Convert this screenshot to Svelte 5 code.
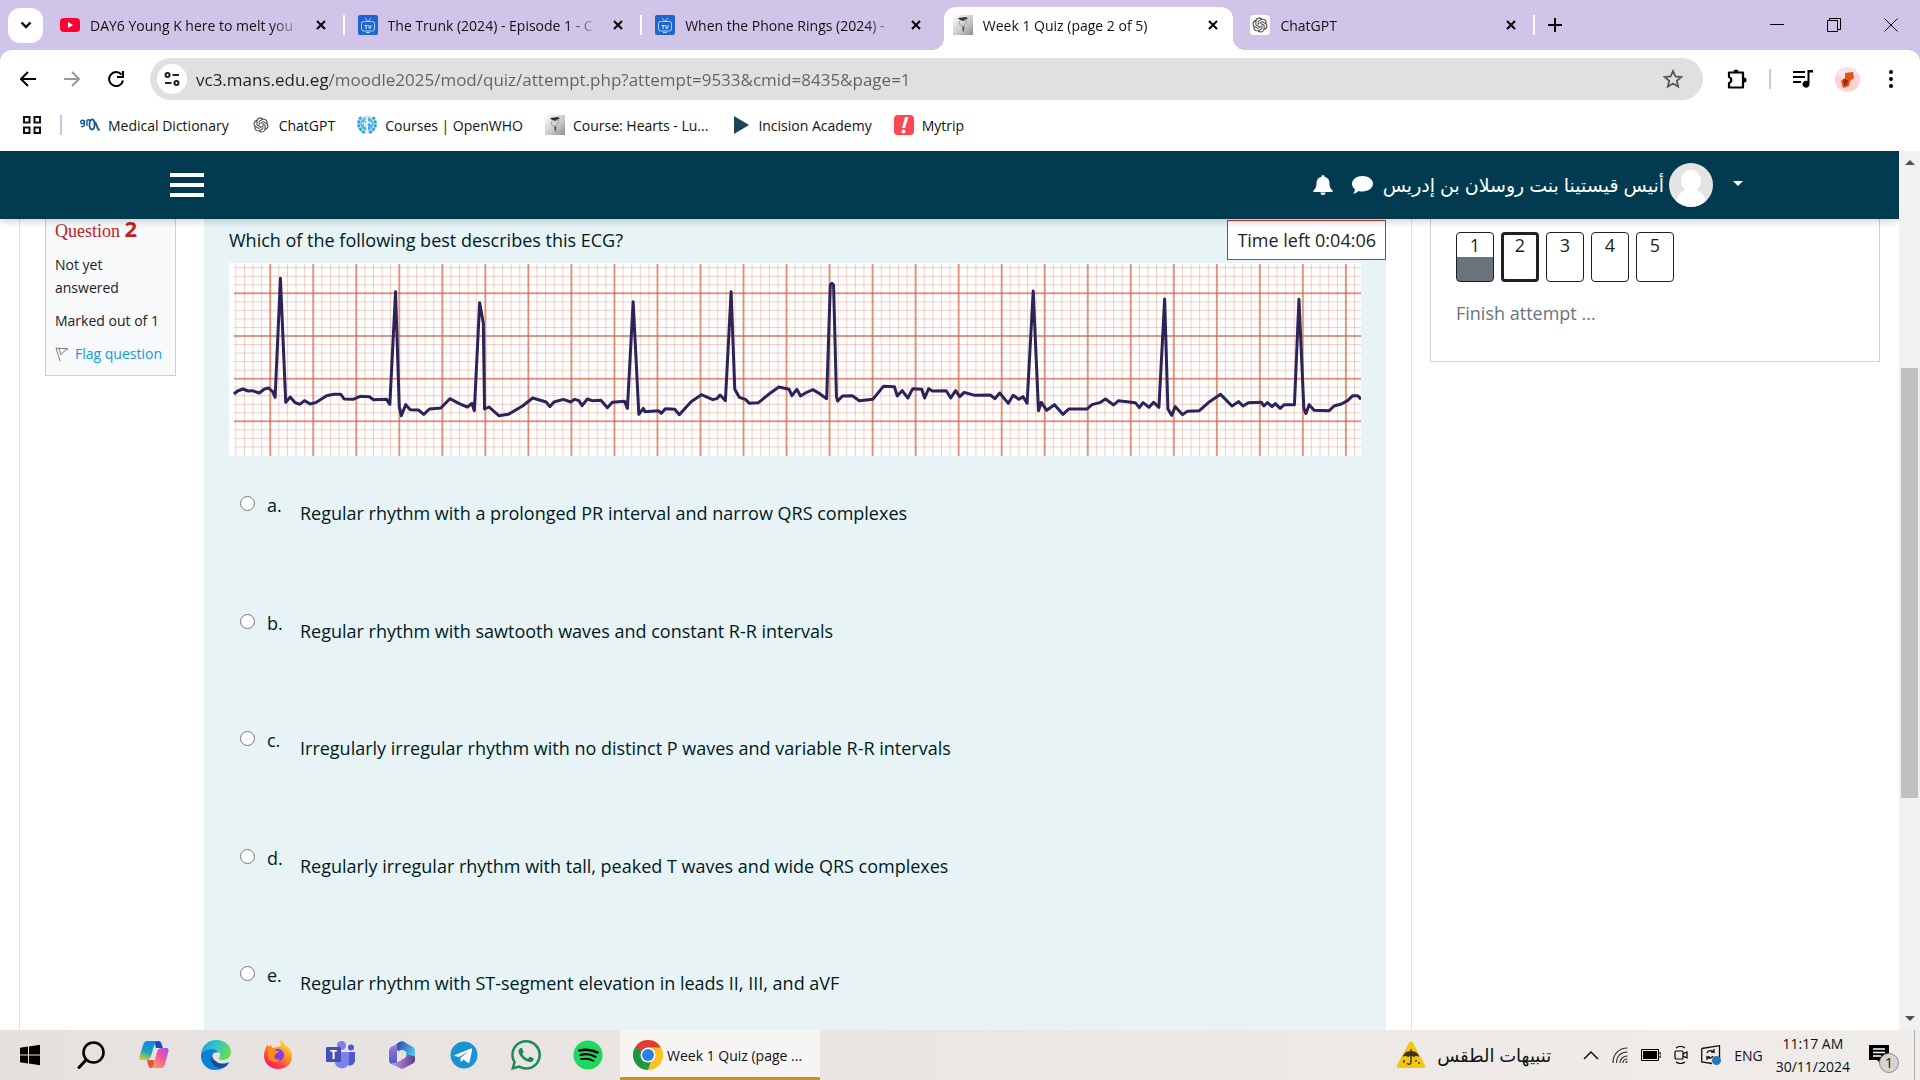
<script lang="ts">
	type Tab = { title: string; icon: string; active?: boolean };

	const tabs: Tab[] = [
		{ title: 'DAY6 Young K here to melt you', icon: 'youtube' },
		{ title: 'The Trunk (2024) - Episode 1 - C', icon: 'tv' },
		{ title: 'When the Phone Rings (2024) -', icon: 'tv' },
		{ title: 'Week 1 Quiz (page 2 of 5)', icon: 'moodle', active: true },
		{ title: 'ChatGPT', icon: 'openai' }
	];

	const bookmarks = [
		{ title: 'Medical Dictionary', icon: 'meddict' },
		{ title: 'ChatGPT', icon: 'openai' },
		{ title: 'Courses | OpenWHO', icon: 'who' },
		{ title: 'Course: Hearts - Lu...', icon: 'moodle' },
		{ title: 'Incision Academy', icon: 'incision' },
		{ title: 'Mytrip', icon: 'mytrip' }
	];

	const answers = [
		'Regular rhythm with a prolonged PR interval and narrow QRS complexes',
		'Regular rhythm with sawtooth waves and constant R-R intervals',
		'Irregularly irregular rhythm with no distinct P waves and variable R-R intervals',
		'Regularly irregular rhythm with tall, peaked T waves and wide QRS complexes',
		'Regular rhythm with ST-segment elevation in leads II, III, and aVF'
	];

	const apps = ['windows', 'search', 'copilot', 'edge', 'firefox', 'teams', 'm365', 'telegram', 'whatsapp', 'spotify'];

	let url = $state('vc3.mans.edu.eg/moodle2025/mod/quiz/attempt.php?attempt=9533&cmid=8435&page=1');
	let selected = $state('');

	// chart paper: one big square is 105.4 x 128 units, five small ones in each
	const minorX = Array.from({ length: 131 }, (_, i) => 577.7 + i * 21.08);
	const majorX = Array.from({ length: 26 }, (_, i) => 662 + i * 105.4);
	const minorY = Array.from({ length: 22 }, (_, i) => 353.2 + i * 25.6);
	const majorY = [430, 558, 686, 814];

	const trace =
		'573,732 582,723 595,717 608,723 618,722 635,729 648,717 658,714 668,725 674,742 687,385 700,757 711,741 722,757 734,763 746,752 760,762 775,757 800,737 818,733 835,733 843,747 865,748 882,739 905,740 915,749 947,748 955,763 969,425 978,770 983,797 994,764 1005,779 1025,780 1038,793 1052,777 1080,774 1102,746 1125,761 1145,771 1156,760 1162,782 1175,458 1184,520 1187,777 1198,771 1222,797 1245,793 1280,768 1305,744 1338,756 1347,770 1357,756 1380,748 1398,756 1408,748 1418,752 1426,767 1439,747 1450,752 1472,751 1488,773 1500,757 1530,754 1537,775 1551,455 1565,793 ' +
		'1576,775 1580,785 1613,782 1620,790 1630,776 1653,778 1664,794 1693,755 1718,734 1746,749 1756,746 1764,735 1777,752 1791,425 1800,718 1811,742 1826,748 1836,760 1858,758 1883,733 1908,711 1933,718 1940,737 1952,718 1961,738 1973,729 1991,719 2008,731 2025,746 2034,405 2038,400 2042,405 2049,740 2052,753 2064,738 2088,737 2105,752 2138,748 2164,709 2191,710 2198,738 2210,722 2224,744 2236,716 2258,718 2265,744 2275,716 2284,723 2318,722 2329,744 2341,722 2351,740 2362,727 2388,736 2426,735 2437,746 2449,729 2470,760 2482,736 2496,748 2506,740 2516,760 2531,423 ' +
		'2544,782 2551,757 2564,781 2583,764 2604,793 2618,777 2663,777 2675,764 2696,757 2708,747 2728,765 2740,752 2781,758 2791,773 2800,758 2815,772 2826,757 2839,772 2853,447 2861,777 2870,796 2879,770 2897,794 2908,784 2938,782 2963,755 2990,733 3018,768 3034,755 3045,768 3058,758 3090,757 3096,768 3105,758 3116,770 3124,761 3136,775 3146,764 3171,764 3182,448 3194,775 3199,791 3207,764 3219,781 3256,782 3268,768 3286,762 3301,752 3314,737 3326,737 3334,748';
</script>

{#snippet favicon(name: string)}
	{#if name === 'youtube'}
		<svg class="favicon" viewBox="0 0 20 20">
			<rect x="0" y="3" width="20" height="14" rx="4" fill="#ff0033" />
			<path d="M8 7v6l5-3z" fill="#fff" />
		</svg>
	{:else if name === 'tv'}
		<svg class="favicon" viewBox="0 0 20 20">
			<rect width="20" height="20" rx="2" fill="#1f66d0" />
			<g fill="none" stroke="#a9d2ff" stroke-width="1">
				<rect x="3.500" y="6.500" width="13" height="9.500" rx="2" />
				<path d="M7 3l3 3.500 3-3.500M8 17.500h4" />
			</g>
			<text class="tv" x="10" y="13.500" text-anchor="middle">TV</text>
		</svg>
	{:else if name === 'moodle'}
		<svg class="favicon" viewBox="0 0 20 20">
			<defs>
				<linearGradient id="steel" x1="0" y1="0" x2="1" y2="1">
					<stop offset="0" stop-color="#fff" />
					<stop offset="0.6" stop-color="#c6c6c6" />
					<stop offset="1" stop-color="#8c8c8c" />
				</linearGradient>
			</defs>
			<rect width="20" height="20" fill="url(#steel)" />
			<path d="M5 3l8-1 2 1.500-3 1-1 1.500-4-1z" fill="#333" />
			<path d="M7 6c-1 3-1 4 2 5M13 4c1 3 0 5-3 7" fill="none" stroke="#999" />
			<path d="M9 11.500h2.500l-0.500 5H10z" fill="#555" />
		</svg>
	{:else if name === 'openai'}
		<svg class="favicon" viewBox="-4 -4 32 32">
			<rect x="-4" y="-4" width="32" height="32" rx="6" fill="#fff" />
			<path
				fill="#333"
				d="M22.2819 9.8211a5.9847 5.9847 0 0 0-.5157-4.9108 6.0462 6.0462 0 0 0-6.5098-2.9A6.0651 6.0651 0 0 0 4.9807 4.1818a5.9847 5.9847 0 0 0-3.9977 2.9 6.0462 6.0462 0 0 0 .7427 7.0966 5.98 5.98 0 0 0 .511 4.9107 6.051 6.051 0 0 0 6.5146 2.9001A5.9847 5.9847 0 0 0 13.2599 24a6.0557 6.0557 0 0 0 5.7718-4.2058 5.9894 5.9894 0 0 0 3.9977-2.9001 6.0557 6.0557 0 0 0-.7475-7.0729zm-9.022 12.6081a4.4755 4.4755 0 0 1-2.8764-1.0408l.1419-.0804 4.7783-2.7582a.7948.7948 0 0 0 .3927-.6813v-6.7369l2.02 1.1686a.071.071 0 0 1 .038.0615v5.5826a4.504 4.504 0 0 1-4.4945 4.4944zm-9.6607-4.1254a4.4708 4.4708 0 0 1-.5346-3.0137l.142.0852 4.783 2.7582a.7712.7712 0 0 0 .7806 0l5.8428-3.3685v2.3324a.0804.0804 0 0 1-.0332.0615L9.74 19.9502a4.4992 4.4992 0 0 1-6.1408-1.6464zM2.3408 7.8956a4.485 4.485 0 0 1 2.3655-1.9728V11.6a.7664.7664 0 0 0 .3879.6765l5.8144 3.3543-2.0201 1.1685a.0757.0757 0 0 1-.071 0l-4.8303-2.7865A4.504 4.504 0 0 1 2.3408 7.872zm16.5963 3.8558L13.1038 8.364 15.1192 7.2a.0757.0757 0 0 1 .071 0l4.8303 2.7913a4.4944 4.4944 0 0 1-.6765 8.1042v-5.6772a.79.79 0 0 0-.407-.667zm2.0107-3.0231l-.142-.0852-4.7735-2.7818a.7759.7759 0 0 0-.7854 0L9.409 9.2297V6.8974a.0662.0662 0 0 1 .0284-.0615l4.8303-2.7866a4.4992 4.4992 0 0 1 6.6802 4.66zM8.3065 12.863l-2.02-1.1638a.0804.0804 0 0 1-.038-.0567V6.0742a4.4992 4.4992 0 0 1 7.3757-3.4537l-.142.0805L8.704 5.459a.7948.7948 0 0 0-.3927.6813zm1.0976-2.3654l2.602-1.4998 2.6069 1.4998v2.9994l-2.5974 1.4997-2.6067-1.4997Z"
			/>
		</svg>
	{:else if name === 'meddict'}
		<svg class="favicon" viewBox="0 0 20 20" fill="none" stroke="#1d5a96">
			<circle cx="2.500" cy="7" r="1.800" stroke-width="1.400" />
			<path d="M4.500 5v4c0 2-1 3-3.500 2.500M7 11V7c0-3 3-3 3 0" stroke-width="1.400" />
			<ellipse cx="12" cy="9.500" rx="2.500" ry="5" stroke-width="1.800" />
			<path d="M14 7c3 0 2 6 5.500 8.500" stroke-width="2" />
		</svg>
	{:else if name === 'who'}
		<svg class="favicon" viewBox="0 0 20 20">
			<circle cx="10" cy="9.500" r="9" fill="#bfe3f5" />
			<circle cx="10" cy="9" r="6.500" fill="#4fb4e0" />
			<path d="M4 2C0 7 0 14 8 18M16 2c4 5 4 12-4 16" fill="none" stroke="#2b9bd3" stroke-width="2.500" stroke-dasharray="3 1" />
			<path d="M10 2v16M8 5c4 1 4 3 1 4s-1 3 2 3M5 9l3-2M12 7l3 2" fill="none" stroke="#fff" stroke-width="1.400" />
		</svg>
	{:else if name === 'incision'}
		<svg class="favicon" viewBox="0 0 20 20"><path d="M4 1l15 9-15 9z" fill="#1d4556" /></svg>
	{:else}
		<svg class="favicon" viewBox="0 0 20 20">
			<rect width="20" height="20" rx="4" fill="#ff4655" />
			<path d="M11 2h3.500l-3.500 11H8z" fill="#fff" />
			<circle cx="9.500" cy="16.500" r="2" fill="#fff" />
		</svg>
	{/if}
{/snippet}

{#snippet appIcon(name: string)}
	{#if name === 'windows'}
		<svg class="app-icon" viewBox="0 0 30 30">
			<path d="M5 7.800l8-1.200v7.900H5zM14 6.400l11-1.600v9.700H14zM5 15.500h8v7.900l-8-1.200zM14 15.500h11v9.700l-11-1.600z" />
		</svg>
	{:else if name === 'search'}
		<svg class="app-icon" viewBox="0 0 30 30" fill="none" stroke="#000">
			<circle cx="16.500" cy="12.500" r="10" stroke-width="2.600" />
			<path d="M9 20L2 27.500" stroke-width="3" stroke-linecap="round" />
		</svg>
	{:else if name === 'copilot'}
		<svg class="app-icon" viewBox="0 0 30 30">
			<defs>
				<linearGradient id="cp1" x1="0.3" y1="0" x2="0" y2="1">
					<stop offset="0" stop-color="#1487e6" />
					<stop offset="0.5" stop-color="#1fa5b8" />
					<stop offset="1" stop-color="#ecd21d" />
				</linearGradient>
				<linearGradient id="cp2" x1="1" y1="0" x2="0.2" y2="1">
					<stop offset="0" stop-color="#a352f0" />
					<stop offset="0.5" stop-color="#f0579e" />
					<stop offset="1" stop-color="#ffa35c" />
				</linearGradient>
			</defs>
			<path d="M15 1h5c2 0 2.500 3 4 7h-7z" fill="#1c49c4" />
			<path d="M8 20h7l2 8h-5c-3 0-3-4-4-8z" fill="#e8553d" />
			<path d="M8 1h11c-2 0-3 2-4 5l-3 10c-1 3-2 4-5 4H3c-3 0-3-2-2-5L4 5c1-3 2-4 4-4z" fill="url(#cp1)" />
			<path d="M22 28H11c3 0 3-2 4-5l3-11c1-3 2-4 5-4h4c3 0 3 2 2 5l-3 11c-1 3-2 4-4 4z" fill="url(#cp2)" />
		</svg>
	{:else if name === 'edge'}
		<svg class="app-icon" viewBox="0 0 30 30">
			<defs>
				<linearGradient id="eg" x1="0" y1="0" x2="1" y2="0.4">
					<stop offset="0" stop-color="#1a9bd8" />
					<stop offset="0.5" stop-color="#2ec3cf" />
					<stop offset="1" stop-color="#64dd55" />
				</linearGradient>
			</defs>
			<path d="M0 14C1 5 8 0 15 0c9 0 15 6 15 12 0 5-4 8-8 8-3 0-5-1-4-2 3-4 0-9-7-9C6 9 2 11 0 14z" fill="url(#eg)" />
			<path d="M0 14c2-3 6-5 11-5 4 0 6 2 7 4-3-2-7 0-7 4 0 6 6 10 11 11-2 1-5 2-8 2C6 30-1 23 0 14z" fill="#0c7fd6" />
			<path d="M11 15c-3 6 2 14 11 13 3-1 5-3 6-6-4 2-9 2-12 0s-5-4-5-7z" fill="#124f94" />
		</svg>
	{:else if name === 'firefox'}
		<svg class="app-icon" viewBox="0 0 30 30">
			<defs>
				<linearGradient id="ff" x1="0.9" y1="0" x2="0.2" y2="1">
					<stop offset="0" stop-color="#fff36b" />
					<stop offset="0.4" stop-color="#ff9a1f" />
					<stop offset="0.8" stop-color="#ff3150" />
					<stop offset="1" stop-color="#e31587" />
				</linearGradient>
			</defs>
			<path d="M18 0c3 2 3 4 5 6 4 2 6 6 6 10 0 8-6 13-14 13S1 23 1 16c0-5 2-8 3-11 1 0 1 1 1 2 1-1 2-2 3-2 0 2 1 3 2 3 3-1 6-1 8-2-1-2-1-4 0-6z" fill="url(#ff)" />
			<circle cx="15" cy="15" r="6" fill="#7a3df0" />
			<path d="M5 8c3 0 6 0 8 3h3c0 2-3 2-4 4-2 3 2 6 5 4-2 5-10 4-12-2z" fill="#ff8a16" />
		</svg>
	{:else if name === 'teams'}
		<svg class="app-icon" viewBox="0 0 30 30">
			<circle cx="26" cy="7.500" r="3" fill="#5059c9" />
			<path d="M20 12h10v9a5 5 0 0 1-7 4z" fill="#5059c9" />
			<circle cx="16.500" cy="5.500" r="4.500" fill="#7b83eb" />
			<path d="M10 12h14v9c0 10-14 9-14 1z" fill="#7b83eb" />
			<rect x="1" y="7" width="15" height="15" rx="1" fill="#464eb8" />
			<text class="teams" x="8.500" y="19" text-anchor="middle">T</text>
		</svg>
	{:else if name === 'm365'}
		<svg class="app-icon" viewBox="0 0 30 30">
			<defs>
				<linearGradient id="m1" x1="0" y1="0" x2="0" y2="1">
					<stop offset="0" stop-color="#b07fe0" />
					<stop offset="1" stop-color="#3f57c4" />
				</linearGradient>
				<linearGradient id="m2" x1="0" y1="0" x2="1" y2="0.6">
					<stop offset="0" stop-color="#27479c" />
					<stop offset="1" stop-color="#52c6f5" />
				</linearGradient>
				<linearGradient id="m3" x1="0" y1="0" x2="1" y2="0">
					<stop offset="0" stop-color="#c79cf0" />
					<stop offset="1" stop-color="#5f3c86" />
				</linearGradient>
			</defs>
			<path d="M13 2L4 7C3 8 2 9 2 11v9c0 2 1 3 2 4l6 2V5z" fill="url(#m1)" />
			<path d="M10 3.500L13.500 1.500c1-0.500 2-0.500 3 0l9.500 5.500c1 1 2 2 2 4v10l-8-5-10-6z" fill="url(#m2)" />
			<path d="M4 23.500l9.500 5c1 0.500 2 0.500 3 0l9.500-5c1-1 2-2 2-4v-3l-8-2-6 6-5 2z" fill="url(#m3)" />
			<circle cx="15" cy="14.500" r="4.500" fill="#e5e1de" />
		</svg>
	{:else if name === 'telegram'}
		<svg class="app-icon" viewBox="0 0 30 30">
			<circle cx="15" cy="15" r="13.500" fill="#1c93d1" />
			<path d="M6 15l16-6.500c1 0 1.500 0.500 1 2L20.500 22c-0.500 1-1 1-2 0.500l-4-3-2 2c-0.500 0.500-1 0-1-0.500v-3l7.500-6.500-9 5.500L6 16c-1-0.500-1-0.700 0-1z" fill="#fff" />
		</svg>
	{:else if name === 'whatsapp'}
		<svg class="app-icon" viewBox="0 0 24 24">
			<path
				fill="#1f8a56"
				d="M17.472 14.382c-.297-.149-1.758-.867-2.03-.967-.273-.099-.471-.148-.67.15-.197.297-.767.966-.94 1.164-.173.199-.347.223-.644.075-.297-.15-1.255-.463-2.39-1.475-.883-.788-1.48-1.761-1.653-2.059-.173-.297-.018-.458.13-.606.134-.133.298-.347.446-.52.149-.174.198-.298.298-.497.099-.198.05-.371-.025-.52-.075-.149-.669-1.612-.916-2.207-.242-.579-.487-.5-.669-.51-.173-.008-.371-.01-.57-.01-.198 0-.52.074-.792.372-.272.297-1.04 1.016-1.04 2.479 0 1.462 1.065 2.875 1.213 3.074.149.198 2.096 3.2 5.077 4.487.709.306 1.262.489 1.694.625.712.227 1.36.195 1.871.118.571-.085 1.758-.719 2.006-1.413.248-.694.248-1.289.173-1.413-.074-.124-.272-.198-.57-.347m-5.421 7.403h-.004a9.87 9.87 0 01-5.031-1.378l-.361-.214-3.741.982.998-3.648-.235-.374a9.86 9.86 0 01-1.51-5.26c.001-5.45 4.436-9.884 9.888-9.884 2.64 0 5.122 1.03 6.988 2.898a9.825 9.825 0 012.893 6.994c-.003 5.45-4.437 9.884-9.885 9.884m8.413-18.297A11.815 11.815 0 0012.05 0C5.495 0 .16 5.335.157 11.892c0 2.096.547 4.142 1.588 5.945L.057 24l6.305-1.654a11.882 11.882 0 005.683 1.448h.005c6.554 0 11.89-5.335 11.893-11.893a11.821 11.821 0 00-3.48-8.413Z"
			/>
		</svg>
	{:else if name === 'spotify'}
		<svg class="app-icon" viewBox="0 0 30 30">
			<circle cx="15" cy="15" r="14.500" fill="#1ed760" />
			<g fill="none" stroke="#000" stroke-linecap="round">
				<path d="M6.500 10.500c6-1.500 12-1 18 2" stroke-width="2.600" />
				<path d="M7.500 15c5-1.500 10-1 15 1.800" stroke-width="2.200" />
				<path d="M8 19.200c5-1 8.500-0.700 12.500 1.700" stroke-width="1.800" />
			</g>
		</svg>
	{:else}
		<svg class="app-icon" viewBox="0 0 30 30">
			<path d="M15 15L2 7.500A15 15 0 0 1 28 7.500z" fill="#e33b2e" />
			<path d="M15 15L28 7.500A15 15 0 0 1 15 30z" fill="#fcc31e" />
			<path d="M15 15v15A15 15 0 0 1 2 7.500z" fill="#229342" />
			<path d="M15 7.500h13l-6.500 11zM8.500 18.500L15 30l6.500-11.500z" fill="#fcc31e" />
			<path d="M8.500 18.500L2 7.500l6 3zM8.500 18.500L15 30l2.500-8z" fill="#229342" />
			<circle cx="15" cy="15" r="7.500" fill="#fff" />
			<circle cx="15" cy="15" r="6" fill="#2f7cee" />
		</svg>
	{/if}
{/snippet}

<div class="screen">
	<header class="browser">
		<div class="tab-strip">
			<button class="tab-search" aria-label="Search tabs">
				<svg width="12" height="8" viewBox="0 0 12 8" fill="none" stroke="#000" stroke-width="2.400"><path d="M1.500 1.500L6 6l4.500-4.500" /></svg>
			</button>
			<div class="tabs">
				{#each tabs as tab, i}
					<div class="tab" class:active={tab.active} class:ruled={i < 2 || i === 4}>
						{@render favicon(tab.icon)}
						<span class="tab-title">{tab.title}</span>
						<button class="tab-close" aria-label="Close tab">
							<svg width="10" height="10" viewBox="0 0 10 10" stroke="#000" stroke-width="2"><path d="M1 1l8 8M9 1L1 9" /></svg>
						</button>
					</div>
				{/each}
			</div>
			<button class="new-tab" aria-label="New tab">
				<svg width="14" height="14" viewBox="0 0 14 14" stroke="#000" stroke-width="2"><path d="M7 0v14M0 7h14" /></svg>
			</button>
			<div class="window-controls">
				<button aria-label="Minimize"><svg width="14" height="14" viewBox="0 0 14 14" stroke="#000"><path d="M0 6.500h14" /></svg></button>
				<button aria-label="Restore">
					<svg width="14" height="14" viewBox="0 0 14 14" fill="none" stroke="#000"><path d="M0.500 2.500h10v11h-10zM2.500 2.500v-2h11v11h-3" /></svg>
				</button>
				<button aria-label="Close"><svg width="14" height="14" viewBox="0 0 14 14" stroke="#000"><path d="M0.500 0.500l13 13M13.500 0.500l-13 13" /></svg></button>
			</div>
		</div>

		<div class="toolbar">
			<button class="tool" aria-label="Back">
				<svg width="16" height="16" viewBox="0 0 16 16" fill="none" stroke="#000" stroke-width="2"><path d="M16 8H1.500M8 1L1 8l7 7" /></svg>
			</button>
			<button class="tool" aria-label="Forward">
				<svg width="16" height="16" viewBox="0 0 16 16" fill="none" stroke="#999" stroke-width="2"><path d="M0 8h14.500M8 1l7 7-7 7" /></svg>
			</button>
			<button class="tool" aria-label="Reload">
				<svg width="16" height="16" viewBox="0 0 16 16" fill="none" stroke="#000" stroke-width="2">
					<path d="M13.500 3.500A7 7 0 1 0 15 9.500M15 0v6H9" />
				</svg>
			</button>
			<div class="omnibox">
				<button class="site-info" aria-label="Site information">
					<svg width="16" height="16" viewBox="0 0 16 16" fill="none" stroke="#222" stroke-width="2">
						<circle cx="3.500" cy="4" r="2" /><path d="M8.500 4H15M1 12h6.500" /><circle cx="12.500" cy="12" r="2" />
					</svg>
				</button>
				<input class="url" type="text" aria-label="Address" bind:value={url} />
				<button class="star" aria-label="Bookmark this tab">
					<svg width="20" height="20" viewBox="0 0 20 20" fill="none" stroke="#555" stroke-width="1.800">
						<path d="M10 2l2.400 5.500 5.900 0.500-4.500 3.900 1.400 5.800L10 14.600l-5.200 3.100 1.400-5.800L1.700 8l5.900-0.500z" />
					</svg>
				</button>
			</div>
			<button class="tool" aria-label="Extensions">
				<svg width="22" height="22" viewBox="0 0 22 22">
					<path d="M3 4.500h14v15H3v-4.500c3-1 3-5 0-6z" fill="none" stroke="#000" stroke-width="2.200" stroke-linejoin="round" />
					<path d="M7.500 4a2.500 2.500 0 0 1 5 0zM18 9.500a2.500 2.500 0 0 1 0 5z" />
				</svg>
			</button>
			<span class="tool-rule"></span>
			<button class="tool" aria-label="Media controls">
				<svg width="20" height="18" viewBox="0 0 20 18">
					<path d="M0 2h12M0 7h12M0 12h8" stroke="#000" stroke-width="2.200" fill="none" />
					<path d="M14.500 0H20v2.500h-3.500V14a3.500 3.500 0 1 1-2-3z" />
				</svg>
			</button>
			<button class="tool" aria-label="Profile">
				<svg width="25" height="25" viewBox="0 0 25 25">
					<circle cx="12.500" cy="12.500" r="12.500" fill="#fbd3cf" />
					<path d="M1 8a12.500 12.500 0 0 1 22.500-1.500L12 12z" fill="#f6e3ea" />
					<path d="M10 6l8-1 1 6-4 3-1 5-6 2-2-7 4-3z" fill="#e0531b" />
					<path d="M8 12l5 1-1 5-3 1z" fill="#9a2f12" />
				</svg>
			</button>
			<button class="tool" aria-label="Menu">
				<svg width="6" height="18" viewBox="0 0 6 18"><circle cx="3" cy="2" r="2" /><circle cx="3" cy="9" r="2" /><circle cx="3" cy="16" r="2" /></svg>
			</button>
		</div>

		<nav class="bookmarks">
			<button class="apps" aria-label="Apps">
				<svg width="18" height="18" viewBox="0 0 18 18" fill="none" stroke="#111" stroke-width="2">
					<path d="M1 1h5.500v5.500H1zM11.500 1H17v5.500h-5.500zM1 11.500h5.500V17H1zM11.500 11.500H17V17h-5.500z" />
				</svg>
			</button>
			<span class="bookmark-rule"></span>
			{#each bookmarks as mark}
				<a class="bookmark" href="#top">
					{@render favicon(mark.icon)}
					<span>{mark.title}</span>
				</a>
			{/each}
		</nav>
	</header>

	<div class="viewport">
		<div class="page">
			<header class="navbar">
				<button class="burger" aria-label="Side panel"><span></span><span></span><span></span></button>
				<div class="usermenu">
					<button aria-label="Notifications">
						<svg width="20" height="20" viewBox="0 0 20 20" fill="#fff">
							<path d="M10 0c1 0 1.500 0.700 1.500 1.800C15 2.600 16.500 5 16.500 8.500c0 4 1.500 5.500 3 7 0.500 0.700 0.500 1.500-0.500 1.500H1c-1 0-1-0.800-0.500-1.500 1.500-1.500 3-3 3-7C3.500 5 5 2.600 8.500 1.800 8.500 0.700 9 0 10 0zM7.500 17.500h5a2.500 2.500 0 0 1-5 0z" />
						</svg>
					</button>
					<button aria-label="Messages">
						<svg width="21" height="18" viewBox="0 0 21 18" fill="#fff">
							<path d="M10.500 0C16.300 0 21 3.400 21 7.800s-4.700 7.700-10.500 7.700c-1.500 0-2.700-0.200-4-0.600C5 16.300 3.200 17.500 1.200 17.500c1-1.200 1.700-2.600 1.700-4.200C1 11.800 0 10 0 7.800 0 3.400 4.700 0 10.500 0z" />
						</svg>
					</button>
					<button class="user" dir="ltr">
						<span class="user-name" dir="rtl" lang="ar">أنيس قيستينا بنت روسلان بن إدريس</span>
						<svg width="44" height="44" viewBox="0 0 44 44">
							<defs><clipPath id="face"><circle cx="22" cy="22" r="22" /></clipPath></defs>
							<g clip-path="url(#face)">
								<rect width="44" height="44" fill="#e4e4e4" />
								<ellipse cx="22" cy="18" rx="10" ry="11" fill="#fff" />
								<path d="M6 44c1-10 5-15 10-17h12c5 2 9 7 10 17z" fill="#fff" />
							</g>
						</svg>
						<span class="caret"></span>
					</button>
				</div>
			</header>

			<div class="content">
				<main class="main">
					<section class="info">
						<h3>Question <b>2</b></h3>
						<div>Not yet answered</div>
						<div>Marked out of 1</div>
						<a class="flag" href="#flag">
							<svg width="14" height="14" viewBox="0 0 14 14" fill="none" stroke="#7a7a7a"><path d="M1 1l4 13M1 1c4 1 8 0 12 1-3 1-5 3-7 6L4 1.500" /></svg>
							<span>Flag question</span>
						</a>
					</section>

					<section class="formulation">
						<div class="timer" role="timer">Time left 0:04:06</div>
						<p class="question">Which of the following best describes this ECG?</p>
						<svg class="ecg" viewBox="561 339 2773 579" preserveAspectRatio="none" role="img" aria-label="ECG rhythm strip">
							<rect x="561" y="339" width="2773" height="579" fill="#fff" />
							<g class="minor">
								{#each minorX as x}<line x1={x} y1="342" x2={x} y2="918" />{/each}
								{#each minorY as y}<line x1="573" y1={y} x2="3334" y2={y} />{/each}
							</g>
							<g class="major">
								{#each majorX as x}<line x1={x} y1="342" x2={x} y2="918" />{/each}
								{#each majorY as y}<line x1="573" y1={y} x2="3334" y2={y} />{/each}
							</g>
							<polyline class="trace" points={trace} />
						</svg>
						<div class="answers">
							{#each answers as answer, i}
								<label class="answer">
									<input type="radio" name="answer" value={answer} bind:group={selected} />
									<span class="letter">{'abcde'[i]}.</span>
									<span class="answer-text">{answer}</span>
								</label>
							{/each}
						</div>
					</section>
				</main>

				<aside class="drawer">
					<section class="quiz-nav">
						<div class="pages">
							{#each [1, 2, 3, 4, 5] as n}
								<a class="page-link" class:answered={n === 1} class:current={n === 2} href="#q{n}">{n}</a>
							{/each}
						</div>
						<a class="finish" href="#finish">Finish attempt ...</a>
					</section>
				</aside>
			</div>
		</div>

		<div class="scrollbar">
			<span class="arrow up"></span>
			<span class="track"><span class="thumb"></span></span>
			<span class="arrow down"></span>
		</div>
	</div>

	<footer class="taskbar">
		{#each apps as app}
			<button class="app" aria-label={app}>{@render appIcon(app)}</button>
		{/each}
		<button class="window">
			{@render appIcon('chrome')}
			<span>Week 1 Quiz (page ...</span>
		</button>

		<div class="tray">
			<button class="weather">
				<svg width="30" height="30" viewBox="0 0 30 30">
					<path d="M13 3c1-2 3-2 4 0l12 22c1 2 0 3-2 3H3c-2 0-3-1-2-3z" fill="#f3c60f" />
					<path d="M7 17c1-8 15-8 16 0-2-1.500-3.500-1.500-5 0-2-1.500-4-1.500-6 0-1.500-1.500-3-1.500-5 0z" fill="#3a3320" />
					<path d="M15 9v13c0 3-3 3-3.500 1M8 20v3M20 20v2M23 22v2" fill="none" stroke="#3a3320" stroke-width="1.400" />
				</svg>
				<span dir="rtl" lang="ar">تنبيهات الطقس</span>
			</button>
			<button aria-label="Show hidden icons"><svg width="16" height="10" viewBox="0 0 16 10" fill="none" stroke="#111" stroke-width="1.500"><path d="M1 9l7-7 7 7" /></svg></button>
			<button aria-label="Network">
				<svg width="16" height="16" viewBox="0 0 16 16" fill="none" stroke="#333" stroke-width="1.200">
					<path d="M1 16C1 7 7 1 15.500 1M4.500 16c0-7 4.500-11 11-11M8 16c0-4 3-7 7.500-7M11 16c0-2.500 2-4 4.500-4" />
					<circle cx="14.500" cy="15" r="1" fill="#333" stroke="none" />
				</svg>
			</button>
			<button aria-label="Battery">
				<svg width="20" height="12" viewBox="0 0 20 12"><path d="M0.500 0.500h17v11h-17zM18 4h2v4h-2" fill="none" stroke="#000" /><rect x="2" y="2" width="14" height="8" /></svg>
			</button>
			<button aria-label="Meet now">
				<svg width="14" height="18" viewBox="0 0 14 18" fill="none" stroke="#000" stroke-width="1.200">
					<rect x="1" y="5" width="8" height="8" rx="1" /><path d="M9 8l4-2v6l-4-2M2 2c3-2 6-2 9 0M2 16c3 2 6 2 9 0" />
				</svg>
			</button>
			<button aria-label="Update">
				<svg width="20" height="20" viewBox="0 0 20 20" fill="none" stroke="#111" stroke-width="1.300">
					<path d="M0.700 3.500L18.500 0.700V14M0.700 3.500V17L11 18.500M6 8c1-3 5-3 7-1V4M13 7h-3M12 11c-1 2-4 3-6 1v3M6 12h3" />
					<circle cx="15.500" cy="15.500" r="4.500" fill="#2d73bb" stroke="none" />
				</svg>
			</button>
			<button class="lang">ENG</button>
			<button class="clock"><span>11:17 AM</span><span>30/11/2024</span></button>
			<button class="notices" aria-label="Notifications">
				<svg width="20" height="20" viewBox="0 0 20 20"><path d="M0 0h20v15h-7v5l-5-5H0z" /><path d="M4 4h12M4 7.500h12M4 11h8" stroke="#fff" stroke-width="1.500" /></svg>
				<span class="badge">1</span>
			</button>
		</div>
	</footer>
</div>

<style>
	:global(body) {
		margin: 0;
		background: #fff;
	}

	.screen {
		display: flex;
		flex-direction: column;
		height: 100vh;
		overflow: hidden;
		font-family: 'Open Sans', 'Noto Sans', 'DejaVu Sans', sans-serif;
		font-size: 14px;
		color: #1d2125;
	}

	.screen *,
	.screen *::before {
		box-sizing: border-box;
	}

	button {
		display: flex;
		align-items: center;
		justify-content: center;
		padding: 0;
		border: 0;
		background: none;
		font: inherit;
		color: inherit;
	}

	a {
		color: inherit;
		text-decoration: none;
	}

	svg {
		display: block;
		flex-shrink: 0;
	}

	/* browser chrome */
	.browser {
		flex-shrink: 0;
		height: 151px;
		background: #d1c4e9;
		color: #111;
	}

	.tab-strip {
		display: flex;
		align-items: center;
		height: 50px;
		padding-left: 8px;
	}

	.tab-search {
		width: 35px;
		height: 35px;
		margin-right: 4px;
		border-radius: 12px;
		background: #fff;
	}

	.tabs {
		display: grid;
		grid-template-columns: repeat(5, 1fr);
		flex: 0 1 1488px;
		height: 50px;
	}

	.tab {
		position: relative;
		display: flex;
		align-items: center;
		min-width: 0;
		padding: 0 14px 0 13px;
	}

	.tab > :global(*) {
		z-index: 1;
	}

	.tab.ruled::after {
		content: '';
		position: absolute;
		right: 0;
		width: 2px;
		height: 20px;
		background: #fff;
	}

	.tab.active::before {
		content: '';
		position: absolute;
		inset: 7px 4px 0;
		border-radius: 12px 12px 0 0;
		background: #fff;
	}

	.tab.active::after {
		content: '';
		position: absolute;
		inset: auto -8px 0;
		height: 12px;
		background:
			radial-gradient(circle at 0 0, transparent 12px, #fff 12px) left / 12px 12px no-repeat,
			radial-gradient(circle at 100% 0, transparent 12px, #fff 12px) right / 12px 12px no-repeat;
	}

	.favicon {
		width: 20px;
		height: 20px;
	}

	.tv {
		font-size: 6px;
		font-weight: 700;
		fill: #d8ecff;
	}

	.tab-title {
		flex: 1;
		margin: 0 8px 0 10px;
		overflow: hidden;
		white-space: nowrap;
		mask-image: linear-gradient(90deg, #000 calc(100% - 32px), transparent);
	}

	.tab-close {
		width: 20px;
		height: 20px;
	}

	.new-tab {
		width: 40px;
		height: 40px;
	}

	.window-controls {
		display: flex;
		margin-right: 1px;
		margin-left: auto;
	}

	.window-controls button {
		width: 57px;
		height: 40px;
	}

	.toolbar {
		display: flex;
		align-items: center;
		height: 58px;
		padding: 0 7px 0 6px;
		border-radius: 12px 12px 0 0;
		background: #fff;
	}

	.tool {
		width: 44px;
		height: 40px;
		flex-shrink: 0;
	}

	.omnibox {
		display: flex;
		flex: 1;
		align-items: center;
		height: 42px;
		margin: 0 12px;
		padding: 0 20px 0 7px;
		border-radius: 21px;
		background: #e0e0e0;
	}

	.site-info {
		width: 30px;
		height: 30px;
		border-radius: 50%;
		background: #fff;
	}

	.url {
		flex: 1;
		min-width: 0;
		height: 30px;
		margin-left: 9px;
		padding: 0;
		border: 0;
		outline: 0;
		font: inherit;
		font-size: 17px;
		color: transparent;
		caret-color: #1f1f1f;
		background: linear-gradient(90deg, #1f1f1f 132px, #616161 132px);
		background-clip: text;
	}

	.tool-rule,
	.bookmark-rule {
		width: 2px;
		height: 20px;
		margin: 0 10px;
		background: #d1c4e9;
	}

	.bookmarks {
		display: flex;
		align-items: center;
		height: 43px;
		padding: 0 23px 9px;
		background: #fff;
	}

	.bookmark-rule {
		margin: 0 18px 0 19px;
	}

	.bookmark {
		display: flex;
		align-items: center;
		gap: 8px;
		margin-right: 22px;
		white-space: nowrap;
	}

	/* moodle page */
	.viewport {
		display: flex;
		flex: 1;
		min-height: 0;
	}

	.page {
		display: flex;
		flex: 1;
		flex-direction: column;
		min-width: 0;
		overflow: hidden;
		font-size: 18px;
	}

	.navbar {
		z-index: 1;
		display: flex;
		flex-shrink: 0;
		align-items: center;
		justify-content: space-between;
		height: 68px;
		padding: 0 156px 0 170px;
		background: #023b50;
		box-shadow: 0 2px 8px rgba(0, 0, 0, 0.2);
		color: #fff;
	}

	.burger {
		flex-direction: column;
		gap: 6px;
	}

	.burger span {
		width: 34px;
		height: 4px;
		background: #fff;
	}

	.usermenu {
		display: flex;
		align-items: center;
		gap: 19px;
	}

	.user {
		margin-left: -9px;
	}

	.user-name {
		margin-right: 5px;
		font-size: 19px;
	}

	.caret {
		margin: 0 0 4px 20px;
		border: 5px solid transparent;
		border-top-color: #fff;
		border-bottom: 0;
	}

	.content {
		display: flex;
		flex: 1;
		min-height: 0;
	}

	.main {
		display: flex;
		flex: 1;
		align-items: flex-start;
		min-width: 0;
		margin-left: 19px;
		padding: 0 25px;
		border: solid #dee2e6;
		border-width: 0 1px;
	}

	.info {
		display: flex;
		flex-direction: column;
		flex-shrink: 0;
		gap: 10px;
		width: 131px;
		margin-right: 28px;
		padding: 0 9px 10px;
		border: 1px solid #cad0d7;
		border-top: 0;
		background: #f8f9fa;
		font-size: 14px;
		line-height: 23px;
	}

	.info h3 {
		margin: 0;
		font-family: 'Liberation Serif', serif;
		font-size: 18px;
		font-weight: 400;
		line-height: 24px;
		color: #c22120;
	}

	.info b {
		font-family: 'Open Sans', sans-serif;
		font-size: 22px;
		line-height: 0;
	}

	.flag {
		display: flex;
		align-items: center;
		gap: 6px;
		white-space: nowrap;
		color: #0f9bdc;
	}

	.formulation {
		position: relative;
		flex: 1;
		align-self: stretch;
		min-width: 0;
		padding: 9px 25px 0;
		background: #e7f3f5;
		color: #001a1e;
	}

	.timer {
		position: absolute;
		top: 1px;
		right: 0;
		padding: 0 9px;
		border: 1px solid #ca3120;
		background: #fff;
		line-height: 38px;
		color: #1d2125;
	}

	.question {
		margin: 0 0 11px;
		line-height: 24px;
	}

	.ecg {
		width: 100%;
		aspect-ratio: 1132 / 193;
	}

	.ecg line,
	.ecg polyline {
		fill: none;
		vector-effect: non-scaling-stroke;
	}

	.minor line {
		stroke: rgba(216, 110, 80, 0.32);
		stroke-width: 1px;
	}

	.major line {
		stroke: rgba(208, 100, 66, 0.6);
		stroke-width: 2px;
	}

	.ecg .trace {
		stroke: #2a2459;
		stroke-width: 3px;
		stroke-linejoin: round;
	}

	.answers {
		display: grid;
		grid-template-rows: repeat(5, 1fr);
		height: 588px;
		margin-top: 36px;
	}

	.answer {
		display: flex;
		align-items: flex-start;
		padding-left: 11px;
		line-height: 26px;
	}

	.answer input {
		width: 15px;
		height: 15px;
		margin: 4px 12px 0 0;
	}

	.letter {
		width: 33px;
	}

	.answer-text {
		padding-top: 8px;
	}

	.drawer {
		flex: 0 0 487px;
		padding: 0 19px 0 18px;
	}

	.quiz-nav {
		height: 143px;
		padding: 13px 25px;
		border: 1px solid #cfd4d8;
		border-top: 0;
	}

	.pages {
		display: flex;
		gap: 7px;
		margin-bottom: 18px;
	}

	.page-link {
		width: 38px;
		height: 50px;
		border: 1px solid #1d2125;
		border-radius: 4px;
		background: #fff;
		line-height: 24px;
		text-align: center;
	}

	.page-link.answered {
		background: linear-gradient(#fff 24px, #6a737b 24px);
	}

	.page-link.current {
		border-width: 3px;
		line-height: 20px;
	}

	.finish {
		line-height: 26px;
		color: #6a737b;
	}

	.scrollbar {
		display: flex;
		flex-direction: column;
		align-items: center;
		justify-content: space-between;
		width: 21px;
		padding: 9px 0;
		background: #f1f1f1;
	}

	.arrow {
		border: 5px solid transparent;
	}

	.arrow.up {
		border-top: 0;
		border-bottom-color: #505050;
	}

	.arrow.down {
		border-bottom: 0;
		border-top-color: #505050;
	}

	.track {
		flex: 1;
		display: flex;
		flex-direction: column;
	}

	.thumb {
		width: 17px;
		height: 430px;
		margin-top: 203px;
		background: #c1c1c1;
	}

	/* windows taskbar */
	.taskbar {
		display: flex;
		flex-shrink: 0;
		height: 50px;
		background: linear-gradient(90deg, #e4e1de, #efecea);
		color: #111;
	}

	.app {
		width: 62px;
		padding-right: 2px;
	}

	.app-icon {
		width: 30px;
		height: 30px;
	}

	.teams {
		font-size: 12px;
		font-weight: 700;
		fill: #fff;
	}

	.window {
		justify-content: flex-start;
		gap: 4px;
		width: 200px;
		padding: 3px 12px 0 13px;
		border-bottom: 3px solid #c8912c;
		background: #f6f5f4;
		white-space: nowrap;
	}

	.tray {
		display: flex;
		align-items: center;
		margin-left: auto;
		margin-right: 5px;
		padding-right: 15px;
		border-right: 1px solid #aaa;
		gap: 13px;
	}

	.weather {
		gap: 11px;
		margin-right: 19px;
		font-size: 18px;
	}

	.clock {
		flex-direction: column;
		line-height: 23px;
	}

	.notices {
		position: relative;
		width: 30px;
		height: 36px;
		margin-left: 6px;
		justify-content: flex-start;
	}

	.badge {
		position: absolute;
		right: 0;
		bottom: 0;
		width: 20px;
		height: 20px;
		border: 1px solid #888;
		border-radius: 50%;
		background: #d6d4d2;
		line-height: 18px;
		text-align: center;
	}
</style>
